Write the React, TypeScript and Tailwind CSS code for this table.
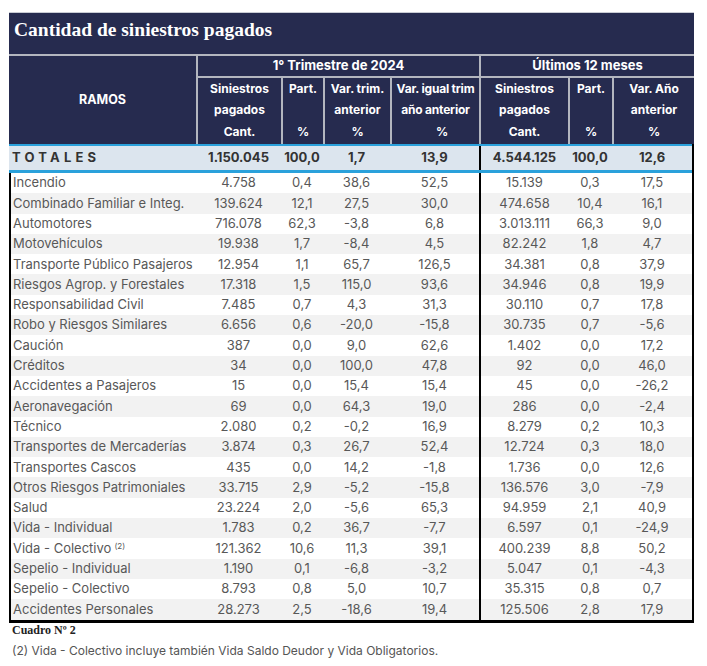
import React from 'react';

const rows: string[][] = [
  ['Incendio', '4.758', '0,4', '38,6', '52,5', '15.139', '0,3', '17,5'],
  ['Combinado Familiar e Integ.', '139.624', '12,1', '27,5', '30,0', '474.658', '10,4', '16,1'],
  ['Automotores', '716.078', '62,3', '-3,8', '6,8', '3.013.111', '66,3', '9,0'],
  ['Motovehículos', '19.938', '1,7', '-8,4', '4,5', '82.242', '1,8', '4,7'],
  ['Transporte Público Pasajeros', '12.954', '1,1', '65,7', '126,5', '34.381', '0,8', '37,9'],
  ['Riesgos Agrop. y Forestales', '17.318', '1,5', '115,0', '93,6', '34.946', '0,8', '19,9'],
  ['Responsabilidad Civil', '7.485', '0,7', '4,3', '31,3', '30.110', '0,7', '17,8'],
  ['Robo y Riesgos Similares', '6.656', '0,6', '-20,0', '-15,8', '30.735', '0,7', '-5,6'],
  ['Caución', '387', '0,0', '9,0', '62,6', '1.402', '0,0', '17,2'],
  ['Créditos', '34', '0,0', '100,0', '47,8', '92', '0,0', '46,0'],
  ['Accidentes a Pasajeros', '15', '0,0', '15,4', '15,4', '45', '0,0', '-26,2'],
  ['Aeronavegación', '69', '0,0', '64,3', '19,0', '286', '0,0', '-2,4'],
  ['Técnico', '2.080', '0,2', '-0,2', '16,9', '8.279', '0,2', '10,3'],
  ['Transportes de Mercaderías', '3.874', '0,3', '26,7', '52,4', '12.724', '0,3', '18,0'],
  ['Transportes Cascos', '435', '0,0', '14,2', '-1,8', '1.736', '0,0', '12,6'],
  ['Otros Riesgos Patrimoniales', '33.715', '2,9', '-5,2', '-15,8', '136.576', '3,0', '-7,9'],
  ['Salud', '23.224', '2,0', '-5,6', '65,3', '94.959', '2,1', '40,9'],
  ['Vida - Individual', '1.783', '0,2', '36,7', '-7,7', '6.597', '0,1', '-24,9'],
  ['Vida - Colectivo', '121.362', '10,6', '11,3', '39,1', '400.239', '8,8', '50,2'],
  ['Sepelio - Individual', '1.190', '0,1', '-6,8', '-3,2', '5.047', '0,1', '-4,3'],
  ['Sepelio - Colectivo', '8.793', '0,8', '5,0', '10,7', '35.315', '0,8', '0,7'],
  ['Accidentes Personales', '28.273', '2,5', '-18,6', '19,4', '125.506', '2,8', '17,9'],
];

const SubHead = ({ lines, className = '' }: { lines: string[]; className?: string }) => (
  <div className={`border-t-2 border-[#b3b6bf] flex flex-col ${className}`}>
    {lines.map((l, i) => (
      <div key={i} className="h-[21.3px] leading-[21.3px] whitespace-nowrap">
        {l}
      </div>
    ))}
  </div>
);

export default function App() {
  return (
    <div className="min-h-screen bg-white pt-[12px] pl-[9px] font-['Inter',sans-serif]">
      <div className="w-[685px]">
        {/* Title */}
        <div className="h-[42px] bg-[#262b4f] border-t border-[#c9ccd4] pt-[7px] pl-[5px]">
          <h1 className="text-[19.5px] leading-[20px] font-bold text-white font-['Liberation_Serif',serif]">
            Cantidad de siniestros pagados
          </h1>
        </div>

        {/* Header */}
        <div className="grid grid-cols-[187px_85px_42px_67px_89px_89px_44px_82px] grid-rows-[20px_68px] bg-[#262b4f] border-t-2 border-[#b3b6bf] text-white font-bold text-[12px] text-center">
          <div className="row-span-2 flex items-center justify-center text-[12.5px]">RAMOS</div>
          <div className="col-span-4 border-l-2 border-[#b3b6bf] flex items-center justify-center text-[13px]">
            1° Trimestre de 2024
          </div>
          <div className="col-span-3 border-l-2 border-[#b3b6bf] flex items-center justify-center text-[13px]">
            Últimos 12 meses
          </div>
          <SubHead className="border-l-2" lines={['Siniestros', 'pagados', 'Cant.']} />
          <SubHead className="border-l-2" lines={['Part.', '', '%']} />
          <SubHead className="border-l-2" lines={['Var. trim.', 'anterior', '%']} />
          <SubHead className="border-l-2 tracking-[-0.2px]" lines={['Var. igual trim', 'año anterior', '\u00a0\u00a0\u00a0\u00a0\u00a0%']} />
          <SubHead className="border-l-2" lines={['Siniestros', 'pagados', 'Cant.']} />
          <SubHead className="border-l-2" lines={['Part.', '', '%']} />
          <SubHead className="border-l-2" lines={['Var. Año', 'anterior', '%']} />
        </div>

        {/* Body */}
        <div className="border-r-2 border-black">
          {/* Totales */}
          <div className="grid grid-cols-[187px_85px_42px_67px_89px_89px_44px_80px] h-[29px] bg-[#dce5ee] border-t-2 border-b-[3px] border-[#2aa1db] text-[13px] font-bold text-[#333] items-center text-center">
            <div className="text-left pl-[3px] tracking-[4.2px]">TOTALES</div>
            <div>1.150.045</div>
            <div>100,0</div>
            <div>1,7</div>
            <div>13,9</div>
            <div className="h-full flex items-center justify-center border-l-2 border-black">4.544.125</div>
            <div>100,0</div>
            <div>12,6</div>
          </div>

          <div className="border-l-2 border-b-[3px] border-black">
            {rows.map((r, i) => (
              <div
                key={r[0]}
                className={`grid grid-cols-[185px_85px_42px_67px_89px_89px_44px_80px] h-[20.3px] items-center text-center text-[13px] text-[#585858] ${
                  i % 2 === 1 ? 'bg-[#f2f2f2]' : 'bg-white'
                }`}
              >
                <div className="text-left pl-[2px] whitespace-nowrap">
                  {r[0]}
                  {r[0] === 'Vida - Colectivo' && <sup className="text-[8px] ml-[3px]">(2)</sup>}
                </div>
                <div>{r[1]}</div>
                <div>{r[2]}</div>
                <div>{r[3]}</div>
                <div>{r[4]}</div>
                <div className="h-full flex items-center justify-center border-l-2 border-black">{r[5]}</div>
                <div>{r[6]}</div>
                <div>{r[7]}</div>
              </div>
            ))}
          </div>
        </div>

        {/* Footer */}
        <div className="pl-[3px] pt-0 leading-[15px] text-[12px] font-bold text-[#222] font-['Liberation_Serif',serif]">
          Cuadro Nº 2
        </div>
        <div className="pl-[3px] pt-[4px] text-[12px] text-[#555]">
          (2) Vida - Colectivo incluye también Vida Saldo Deudor y Vida Obligatorios.
        </div>
      </div>
    </div>
  );
}
